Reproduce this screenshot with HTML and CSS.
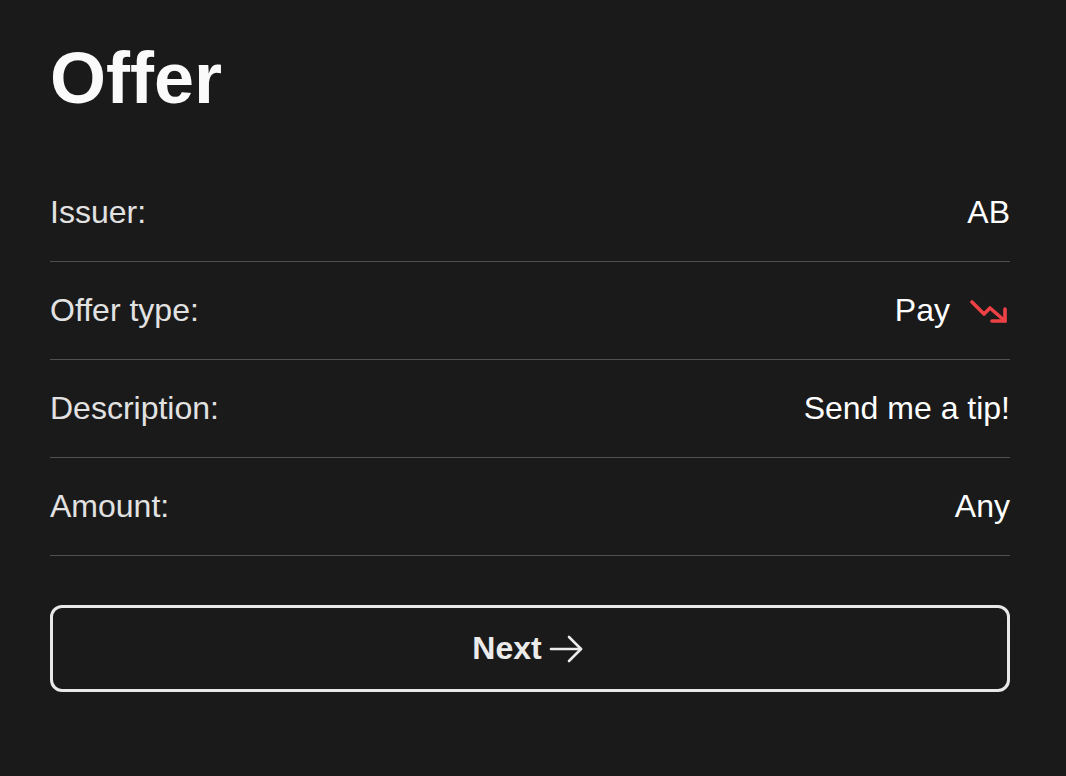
FILE: index.html
```html
<!DOCTYPE html>
<html>
<head>
<meta charset="utf-8">
<link rel="stylesheet" href="styles.css">
</head>
<body>
<main class="page">
  <h1 class="title">Offer</h1>
  <div class="rows">
    <div class="row"><span class="label">Issuer:</span><span class="value">AB</span></div>
    <div class="row"><span class="label">Offer type:</span><span class="value value-icon">Pay
      <svg class="trend" width="40" height="40" viewBox="0 0 40 40" fill="none" stroke="#ee4146" stroke-width="3.6" stroke-linecap="round" stroke-linejoin="round"><polyline points="2,11 14,23 20,17 35,30"/><polyline points="35,18 35,30 22,30"/></svg></span></div>
    <div class="row"><span class="label">Description:</span><span class="value">Send me a tip!</span></div>
    <div class="row"><span class="label">Amount:</span><span class="value">Any</span></div>
  </div>
  <button class="next">Next
    <svg width="40" height="32" viewBox="0 0 40 32" fill="none" stroke="#ebebeb" stroke-width="2.6" stroke-linecap="round" stroke-linejoin="round"><line x1="3" y1="16" x2="33" y2="16"/><polyline points="21,4 33,16 21,28"/></svg>
  </button>
</main>
</body>
</html>
```
FILE: styles.css
```css
html, body {
  margin: 0;
  padding: 0;
  background: #1a1a1a;
}
body {
  font-family: "Liberation Sans", Arial, Helvetica, sans-serif;
  color: #e6e6e6;
}
.page {
  padding: 35px 56px 0 50px;
}
.title {
  margin: 0 0 43px;
  font-size: 72px;
  line-height: 86px;
  font-weight: 700;
  color: #fafafa;
}
.rows {
  display: flex;
  flex-direction: column;
}
.row {
  height: 97px;
  border-bottom: 1px solid #505050;
  display: flex;
  align-items: center;
  justify-content: space-between;
  font-size: 32px;
}
.label {
  color: #e2e2e2;
}
.value {
  color: #ffffff;
}
.value-icon {
  display: flex;
  align-items: center;
  gap: 20px;
}
.trend {
  display: block;
}
.next {
  margin-top: 49px;
  width: 100%;
  height: 87px;
  background: transparent;
  border: 3px solid #e8e8e8;
  border-radius: 12px;
  display: flex;
  align-items: center;
  justify-content: center;
  gap: 6px;
  font-family: "Liberation Sans", Arial, Helvetica, sans-serif;
  font-size: 32px;
  font-weight: 700;
  color: #ebebeb;
  padding: 0;
}
.next svg {
  display: block;
}
```
